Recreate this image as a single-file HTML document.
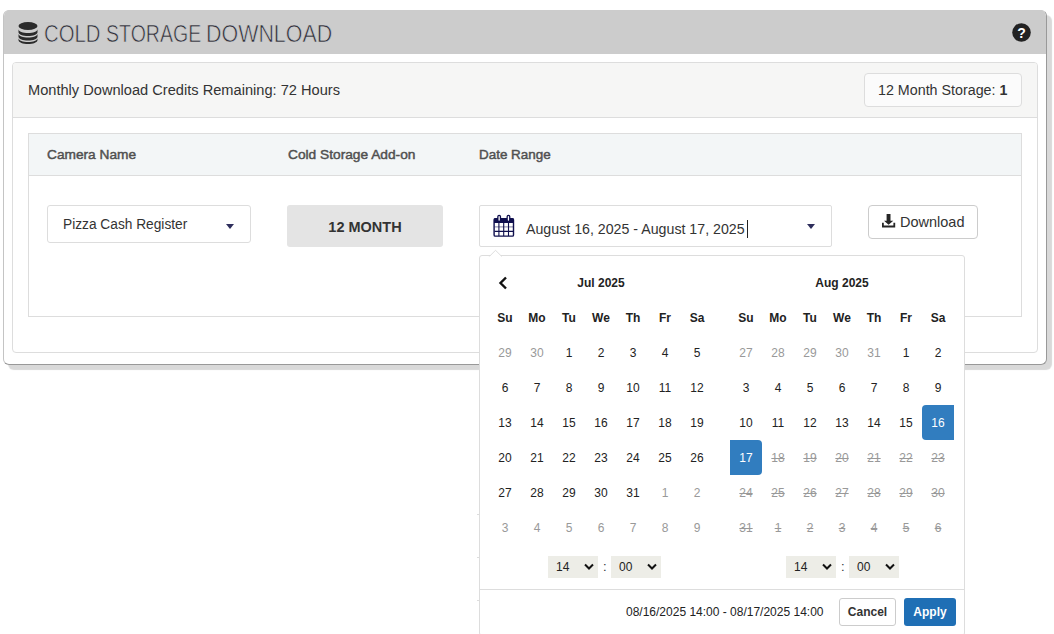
<!DOCTYPE html>
<html><head><meta charset="utf-8"><title>Cold Storage Download</title>
<style>
*{box-sizing:border-box;margin:0;padding:0}
html,body{width:1054px;height:634px;overflow:hidden;background:#fff;font-family:"Liberation Sans",sans-serif;color:#333}
div,span,svg{position:absolute}
.t{white-space:nowrap;line-height:1;transform-origin:0 50%}
#outer{left:3px;top:10px;width:1044px;height:355px;border:1px solid #c4c4c4;border-color:#c8c8c8 #999 #999 #c4c4c4;border-radius:6px;background:#fff;box-shadow:5px 5px 1px #d9d9d9}
#hdr{left:4px;top:10px;width:1042px;height:44px;background:#cccccc;border-radius:6px 6px 0 0}
.ttl{top:22.5px;font-size:23.5px;color:#2e2e38;-webkit-text-stroke:0.65px #cccccc}
#inner{left:12px;top:62px;width:1026px;height:291px;border:1px solid #ddd;border-radius:4px;background:#fff}
#ihdr{left:13px;top:63px;width:1024px;height:55px;background:#f6f6f5;border-bottom:1px solid #ddd;border-radius:3px 3px 0 0}
#credits{left:28px;top:83px;font-size:14px;color:#333;transform:scaleX(1.044)}
#stor{left:864px;top:73px;width:158px;height:34px;border:1px solid #ddd;border-radius:4px;background:#fbfbfb}
#stort{left:878px;top:82.7px;font-size:14px;color:#333;transform:scaleX(1.02)}
#tbl{left:28px;top:133px;width:994px;height:184px;border:1px solid #ddd;background:#fff}
#thead{left:29px;top:134px;width:992px;height:42px;background:#f3f6f7;border-bottom:1px solid #ddd}
.th{top:148px;font-size:13px;font-weight:normal;color:#505050;-webkit-text-stroke:0.45px #505050}
#sel{left:47px;top:205px;width:204px;height:38px;border:1px solid #ddd;border-radius:3px;background:#fff}
#selt{left:63px;top:217px;font-size:14px;color:#333;transform:scaleX(0.98)}
.caret{width:0;height:0;border-left:4.5px solid transparent;border-right:4.5px solid transparent;border-top:5px solid #2e2e5c}
#badge{left:287px;top:205px;width:156px;height:42px;background:#e4e4e4;border-radius:3px}
#badget{left:287px;top:220px;width:156px;text-align:center;font-size:14px;font-weight:bold;color:#333;transform-origin:50% 50%;transform:scaleX(1.035)}
#date{left:479px;top:205px;width:353px;height:42px;border:1px solid #ddd;border-radius:2px;background:#fff}
#datet{left:526px;top:222.3px;font-size:14px;color:#333;transform:scaleX(1.014)}
#cursor{left:747px;top:220px;width:1px;height:18px;background:#222}
#dl{left:868px;top:205px;width:110px;height:34px;border:1px solid #ccc;border-radius:4px;background:#fff}
#dlt{left:899.5px;top:214.3px;font-size:15px;color:#333;transform:scaleX(0.967)}
#drp{left:479px;top:255px;width:486px;height:381px;border:1px solid #ddd;border-radius:3px;background:#fff}
.tick{left:477px;width:3px;height:1px;background:#ddd}
.mon{top:277px;width:120px;text-align:center;font-size:12px;font-weight:bold;color:#222}
.c{width:32px;height:35px;line-height:37px;text-align:center;font-size:12px;color:#222}
.c.h{font-weight:bold}
.c.off{color:#999}
.c.dis{color:#999;text-decoration:line-through}
.c.act{background:#317dbf;color:#fff}
.tsel{top:556px;width:50px;height:22px;background:#edede7}
.tselt{top:561px;font-size:12px;color:#222}
.colon{top:559.7px;font-size:13px;color:#333}
#footl{left:480px;top:589px;width:484px;height:1px;background:#ddd}
#foott{left:626px;top:605.5px;font-size:12px;color:#222}
#cancel{left:839px;top:598px;width:57px;height:28px;border:1px solid #ccc;border-radius:3px;background:#fff}
#cancelt{left:839px;top:605.5px;width:57px;text-align:center;font-size:12px;font-weight:bold;color:#333}
#apply{left:904px;top:598px;width:52px;height:28px;border-radius:3px;background:#1f6fb5}
#applyt{left:904px;top:605.5px;width:52px;text-align:center;font-size:12px;font-weight:bold;color:#fff}
</style></head><body>
<div id="outer"></div><div id="hdr"></div>
<svg id="dbicon" style="left:18px;top:22px" width="20" height="22" viewBox="0 0 20 22"><g fill="#2b2b2b"><ellipse cx="10" cy="4" rx="9.5" ry="4"/><path d="M0.5 7.2 C0.5 9.5 5 11 10 11 S19.5 9.5 19.5 7.2 V10.2 C19.5 12.5 15 14 10 14 S0.5 12.500 0.5 10.2Z"/><path d="M0.5 11.700 C0.5 14 5 15.500 10 15.500 S19.5 14 19.5 11.700 V14.7 C19.5 17 15 18.500 10 18.500 S0.5 17 0.5 14.7Z"/><path d="M0.5 16.2 C0.5 18.5 5 20 10 20 S19.5 18.5 19.5 16.2 V18 C19.5 20.500 15 22 10 22 S0.5 20.500 0.5 18Z"/></g></svg>
<span class="t ttl" style="left:43.6px;transform:scaleX(0.8665)">COLD </span><span class="t ttl" style="left:106.3px;transform:scaleX(0.832)">STORAGE </span><span class="t ttl" style="left:205.5px;transform:scaleX(0.912)">DOWNLOAD</span>
<svg style="left:1011.5px;top:22.700px" width="19" height="19" viewBox="0 0 19 19"><circle cx="9.5" cy="9.5" r="9.300" fill="#222"/><text x="9.5" y="14.5" text-anchor="middle" font-family="Liberation Sans, sans-serif" font-weight="bold" font-size="14" fill="#fff">?</text></svg>
<div id="inner"></div><div id="ihdr"></div>
<span class="t" id="credits">Monthly Download Credits Remaining: 72 Hours</span>
<div id="stor"></div><span class="t" id="stort">12 Month Storage: <b>1</b></span>
<div id="tbl"></div><div id="thead"></div>
<span class="t th" style="left:47px;transform:scaleX(1.054)">Camera Name</span>
<span class="t th" style="left:287.5px;transform:scaleX(1.056)">Cold Storage Add-on</span>
<span class="t th" style="left:479px;transform:scaleX(1.033)">Date Range</span>
<div id="sel"></div><span class="t" id="selt">Pizza Cash Register</span><div class="caret" style="left:226px;top:224px"></div>
<div id="badge"></div><span class="t" id="badget">12 MONTH</span>
<div id="date"></div>
<svg style="left:493px;top:214px" width="22" height="24" viewBox="0 0 22 24"><g fill="none" stroke="#10104e"><rect x="1.100" y="4.600" width="19.400" height="17.500" rx="1.200" stroke-width="1.400"/><path d="M1 6.700H20.600" stroke-width="4.600"/><path d="M1.500 17.400H20.500M5.900 9V22M10.700 9V22M15.500 9V22" stroke-width="1.100"/><path d="M1.500 12.900H20.500" stroke-width="1" stroke-opacity=".55"/></g><rect x="4.200" y="0.800" width="3.900" height="6.400" rx="1.900" fill="#10104e"/><rect x="13.500" y="0.800" width="3.900" height="6.400" rx="1.900" fill="#10104e"/><rect x="5.500" y="2.100" width="1.300" height="4.600" rx=".6" fill="#fff"/><rect x="14.800" y="2.100" width="1.300" height="4.600" rx=".6" fill="#fff"/></svg>
<span class="t" id="datet">August 16, 2025 - August 17, 2025</span><div id="cursor"></div><div class="caret" style="left:807px;top:224px"></div>
<div id="dl"></div>
<svg style="left:881px;top:213px" width="16" height="16" viewBox="0 0 16 16"><g fill="#262626"><path d="M5.600 1h3.900v6.800h2.800L7.600 11.800 3 7.800h2.600z"/><path d="M1 9.700h1.800v2.700h9.600v-2.700h1.800v4.900h-13.200z"/></g></svg>
<span class="t" id="dlt">Download</span>
<div id="drp"></div><div class="tick" style="top:514px"></div><div class="tick" style="top:557px"></div><div class="tick" style="top:600px"></div>
<svg style="left:487px;top:248px" width="16" height="9" viewBox="0 0 16 9"><path d="M2.300 8.500 L8.500 2.300 L14.800 8.500" fill="#fff" stroke="#ddd" stroke-width="1"/><path d="M3 9H14" stroke="#fff" stroke-width="2"/></svg>
<svg style="left:498px;top:276px" width="10" height="14" viewBox="0 0 10 14"><path d="M8 1.500 L2.500 7 L8 12.500" fill="none" stroke="#111" stroke-width="2.400"/></svg>
<span class="t mon" style="left:541px">Jul 2025</span>
<span class="t mon" style="left:782px">Aug 2025</span>
<div class="c h" style="left:489px;top:300px">Su</div>
<div class="c h" style="left:521px;top:300px">Mo</div>
<div class="c h" style="left:553px;top:300px">Tu</div>
<div class="c h" style="left:585px;top:300px">We</div>
<div class="c h" style="left:617px;top:300px">Th</div>
<div class="c h" style="left:649px;top:300px">Fr</div>
<div class="c h" style="left:681px;top:300px">Sa</div>
<div class="c off" style="left:489px;top:335px">29</div>
<div class="c off" style="left:521px;top:335px">30</div>
<div class="c " style="left:553px;top:335px">1</div>
<div class="c " style="left:585px;top:335px">2</div>
<div class="c " style="left:617px;top:335px">3</div>
<div class="c " style="left:649px;top:335px">4</div>
<div class="c " style="left:681px;top:335px">5</div>
<div class="c " style="left:489px;top:370px">6</div>
<div class="c " style="left:521px;top:370px">7</div>
<div class="c " style="left:553px;top:370px">8</div>
<div class="c " style="left:585px;top:370px">9</div>
<div class="c " style="left:617px;top:370px">10</div>
<div class="c " style="left:649px;top:370px">11</div>
<div class="c " style="left:681px;top:370px">12</div>
<div class="c " style="left:489px;top:405px">13</div>
<div class="c " style="left:521px;top:405px">14</div>
<div class="c " style="left:553px;top:405px">15</div>
<div class="c " style="left:585px;top:405px">16</div>
<div class="c " style="left:617px;top:405px">17</div>
<div class="c " style="left:649px;top:405px">18</div>
<div class="c " style="left:681px;top:405px">19</div>
<div class="c " style="left:489px;top:440px">20</div>
<div class="c " style="left:521px;top:440px">21</div>
<div class="c " style="left:553px;top:440px">22</div>
<div class="c " style="left:585px;top:440px">23</div>
<div class="c " style="left:617px;top:440px">24</div>
<div class="c " style="left:649px;top:440px">25</div>
<div class="c " style="left:681px;top:440px">26</div>
<div class="c " style="left:489px;top:475px">27</div>
<div class="c " style="left:521px;top:475px">28</div>
<div class="c " style="left:553px;top:475px">29</div>
<div class="c " style="left:585px;top:475px">30</div>
<div class="c " style="left:617px;top:475px">31</div>
<div class="c off" style="left:649px;top:475px">1</div>
<div class="c off" style="left:681px;top:475px">2</div>
<div class="c off" style="left:489px;top:510px">3</div>
<div class="c off" style="left:521px;top:510px">4</div>
<div class="c off" style="left:553px;top:510px">5</div>
<div class="c off" style="left:585px;top:510px">6</div>
<div class="c off" style="left:617px;top:510px">7</div>
<div class="c off" style="left:649px;top:510px">8</div>
<div class="c off" style="left:681px;top:510px">9</div>
<div class="c h" style="left:730px;top:300px">Su</div>
<div class="c h" style="left:762px;top:300px">Mo</div>
<div class="c h" style="left:794px;top:300px">Tu</div>
<div class="c h" style="left:826px;top:300px">We</div>
<div class="c h" style="left:858px;top:300px">Th</div>
<div class="c h" style="left:890px;top:300px">Fr</div>
<div class="c h" style="left:922px;top:300px">Sa</div>
<div class="c off" style="left:730px;top:335px">27</div>
<div class="c off" style="left:762px;top:335px">28</div>
<div class="c off" style="left:794px;top:335px">29</div>
<div class="c off" style="left:826px;top:335px">30</div>
<div class="c off" style="left:858px;top:335px">31</div>
<div class="c " style="left:890px;top:335px">1</div>
<div class="c " style="left:922px;top:335px">2</div>
<div class="c " style="left:730px;top:370px">3</div>
<div class="c " style="left:762px;top:370px">4</div>
<div class="c " style="left:794px;top:370px">5</div>
<div class="c " style="left:826px;top:370px">6</div>
<div class="c " style="left:858px;top:370px">7</div>
<div class="c " style="left:890px;top:370px">8</div>
<div class="c " style="left:922px;top:370px">9</div>
<div class="c " style="left:730px;top:405px">10</div>
<div class="c " style="left:762px;top:405px">11</div>
<div class="c " style="left:794px;top:405px">12</div>
<div class="c " style="left:826px;top:405px">13</div>
<div class="c " style="left:858px;top:405px">14</div>
<div class="c " style="left:890px;top:405px">15</div>
<div class="c act" style="left:922px;top:405px;border-radius:4px 0 0 4px">16</div>
<div class="c act" style="left:730px;top:440px;border-radius:0 4px 4px 0">17</div>
<div class="c dis" style="left:762px;top:440px">18</div>
<div class="c dis" style="left:794px;top:440px">19</div>
<div class="c dis" style="left:826px;top:440px">20</div>
<div class="c dis" style="left:858px;top:440px">21</div>
<div class="c dis" style="left:890px;top:440px">22</div>
<div class="c dis" style="left:922px;top:440px">23</div>
<div class="c dis" style="left:730px;top:475px">24</div>
<div class="c dis" style="left:762px;top:475px">25</div>
<div class="c dis" style="left:794px;top:475px">26</div>
<div class="c dis" style="left:826px;top:475px">27</div>
<div class="c dis" style="left:858px;top:475px">28</div>
<div class="c dis" style="left:890px;top:475px">29</div>
<div class="c dis" style="left:922px;top:475px">30</div>
<div class="c dis" style="left:730px;top:510px">31</div>
<div class="c dis" style="left:762px;top:510px">1</div>
<div class="c dis" style="left:794px;top:510px">2</div>
<div class="c dis" style="left:826px;top:510px">3</div>
<div class="c dis" style="left:858px;top:510px">4</div>
<div class="c dis" style="left:890px;top:510px">5</div>
<div class="c dis" style="left:922px;top:510px">6</div>
<div class="tsel" style="left:548px"></div><span class="t tselt" style="left:556px">14</span><svg style="left:584px;top:563px" width="10" height="8" viewBox="0 0 10 8"><path d="M1 1.500 L5 5.500 L9 1.500" fill="none" stroke="#111" stroke-width="2"/></svg>
<span class="t colon" style="left:603px">:</span>
<div class="tsel" style="left:611px"></div><span class="t tselt" style="left:619px">00</span><svg style="left:647px;top:563px" width="10" height="8" viewBox="0 0 10 8"><path d="M1 1.500 L5 5.500 L9 1.500" fill="none" stroke="#111" stroke-width="2"/></svg>
<div class="tsel" style="left:786px"></div><span class="t tselt" style="left:794px">14</span><svg style="left:822px;top:563px" width="10" height="8" viewBox="0 0 10 8"><path d="M1 1.500 L5 5.500 L9 1.500" fill="none" stroke="#111" stroke-width="2"/></svg>
<span class="t colon" style="left:841px">:</span>
<div class="tsel" style="left:849px"></div><span class="t tselt" style="left:857px">00</span><svg style="left:885px;top:563px" width="10" height="8" viewBox="0 0 10 8"><path d="M1 1.500 L5 5.500 L9 1.500" fill="none" stroke="#111" stroke-width="2"/></svg>
<div id="footl"></div><span class="t" id="foott">08/16/2025 14:00 - 08/17/2025 14:00</span>
<div id="cancel"></div><span class="t" id="cancelt">Cancel</span>
<div id="apply"></div><span class="t" id="applyt">Apply</span>
</body></html>
